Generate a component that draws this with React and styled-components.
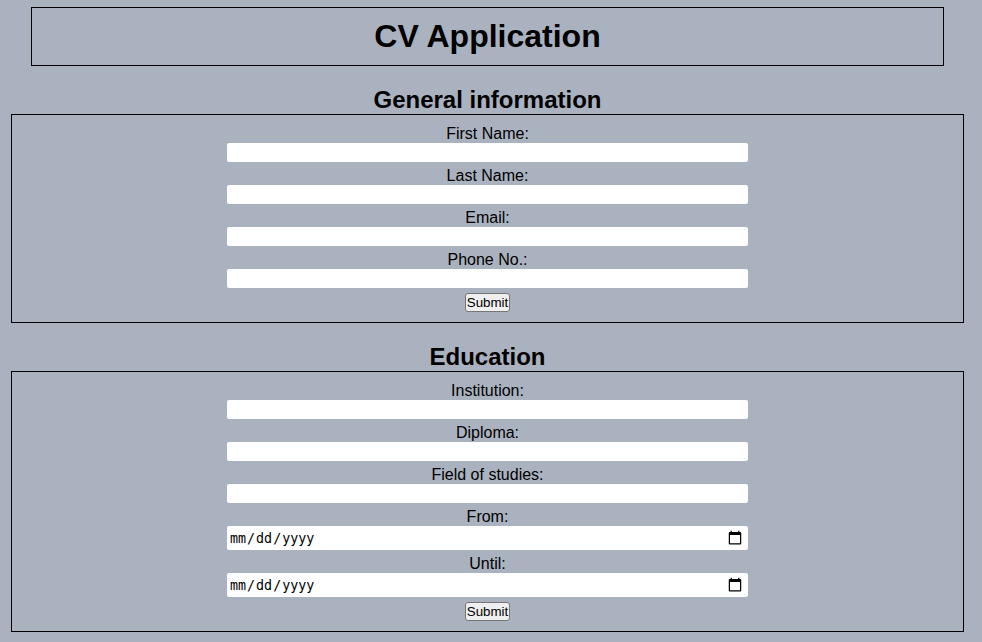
import React from "react";
import styled, { createGlobalStyle } from "styled-components";

const GlobalStyle = createGlobalStyle`
  * {
    box-sizing: border-box;
    margin: 0;
    padding: 0;
  }
  body {
    background: #abb2bf;
    color: #000;
    font-family: "Liberation Sans", Arial, sans-serif;
    font-size: 16px;
    overflow: hidden;
  }
`;

const calendarSvg = encodeURIComponent(
  '<svg xmlns="http://www.w3.org/2000/svg" width="16" height="16" viewBox="-0.8 0 25.6 25.6"><path d="M20 3h-1V1h-2v2H7V1H5v2H4c-1.1 0-2 .9-2 2v16c0 1.1.9 2 2 2h16c1.1 0 2-.9 2-2V5c0-1.1-.9-2-2-2zm0 18H4V8h16v13z"/></svg>'
);

const Page = styled.main`
  display: flex;
  flex-direction: column;
  width: 953px;
  margin: 7px 0 0 11px;
  gap: 19px;
`;

const Header = styled.header`
  margin: 0 20px;
  padding: 10px;
  border: 1px solid #000;
  text-align: center;
`;

const Title = styled.h1`
  font-size: 32px;
  line-height: 37px;
`;

const SectionTitle = styled.h2`
  font-size: 24px;
  line-height: 29px;
  text-align: center;
`;

const Form = styled.form`
  display: flex;
  flex-direction: column;
  align-items: center;
  gap: 5px;
  padding: 10px;
  border: 1px solid #000;
`;

const Field = styled.label`
  display: flex;
  flex-direction: column;
  width: 521px;
  line-height: 18px;
  text-align: center;
`;

const Input = styled.input`
  width: 100%;
  height: ${({ type }) => (type === "date" ? "24px" : "19px")};
  padding: 2px;
  border: 0;
  border-radius: 2px;
  background-color: #fff;

  &::-webkit-calendar-picker-indicator {
    box-sizing: content-box;
    width: 16px;
    height: 16px;
    padding: 2px;
    margin-right: 1px;
    background: url("data:image/svg+xml,${calendarSvg}") center / 16px 16px
      no-repeat;
  }
`;

const SubmitButton = styled.button`
  height: 19px;
  padding: 1px;
  border: 1px solid #767676;
  border-radius: 3px;
  background: #efefef;
  color: #000;
  font: 13.3333px/15px "Liberation Sans", Arial, sans-serif;
`;

const sections = [
  {
    title: "General information",
    fields: [
      { label: "First Name:" },
      { label: "Last Name:" },
      { label: "Email:" },
      { label: "Phone No.:" },
    ],
  },
  {
    title: "Education",
    fields: [
      { label: "Institution:" },
      { label: "Diploma:" },
      { label: "Field of studies:" },
      { label: "From:", type: "date" },
      { label: "Until:", type: "date" },
    ],
  },
];

function FormSection({ title, fields }) {
  return (
    <section>
      <SectionTitle>{title}</SectionTitle>
      <Form onSubmit={(event) => event.preventDefault()}>
        {fields.map(({ label, type = "text" }) => (
          <Field key={label}>
            {label}
            <Input type={type} />
          </Field>
        ))}
        <SubmitButton type="submit">Submit</SubmitButton>
      </Form>
    </section>
  );
}

export default function App() {
  return (
    <>
      <GlobalStyle />
      <Page>
        <Header>
          <Title>CV Application</Title>
        </Header>
        {sections.map((section) => (
          <FormSection key={section.title} {...section} />
        ))}
      </Page>
    </>
  );
}
